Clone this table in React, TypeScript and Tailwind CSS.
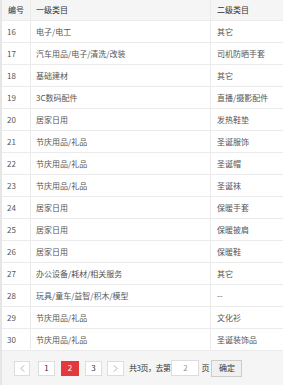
import React from "react";

// 表格数据：编号 / 一级类目 / 二级类目
const rows: [number, string, string][] = [
  [16, "电子/电工", "其它"],
  [17, "汽车用品/电子/清洗/改装", "司机防晒手套"],
  [18, "基础建材", "其它"],
  [19, "3C数码配件", "直播/摄影配件"],
  [20, "居家日用", "发热鞋垫"],
  [21, "节庆用品/礼品", "圣诞服饰"],
  [22, "节庆用品/礼品", "圣诞帽"],
  [23, "节庆用品/礼品", "圣诞袜"],
  [24, "居家日用", "保暖手套"],
  [25, "居家日用", "保暖披肩"],
  [26, "居家日用", "保暖鞋"],
  [27, "办公设备/耗材/相关服务", "其它"],
  [28, "玩具/童车/益智/积木/模型", "--"],
  [29, "节庆用品/礼品", "文化衫"],
  [30, "节庆用品/礼品", "圣诞装饰品"],
];

export default function App() {
  return (
    <div
      className="w-[283px] h-[385px] bg-white text-[8px] text-[#555] border-l-2 border-[#e6e6e6] overflow-hidden"
      style={{ fontFamily: '"Microsoft YaHei", "Noto Sans CJK SC", sans-serif' }}
    >
      {/* 表头 */}
      <div className="grid grid-cols-[29px_180px_1fr] h-[21px] bg-[#f5f5f5] text-[#333] border-b border-[#ebebeb]">
        <div className="flex items-center pl-[6px] border-r border-[#ebebeb]">编号</div>
        <div className="flex items-center pl-[5px] border-r border-[#ebebeb]">一级类目</div>
        <div className="flex items-center pl-[6px]">二级类目</div>
      </div>

      {rows.map(([id, first, second]) => (
        <div
          key={id}
          className="grid grid-cols-[29px_180px_1fr] h-[22px] border-b border-[#ebebeb]"
        >
          <div className="flex items-center pl-[5px] border-r border-[#ebebeb]">{id}</div>
          <div className="flex items-center pl-[5px] border-r border-[#ebebeb]">{first}</div>
          <div className="flex items-center pl-[6px]">{second}</div>
        </div>
      ))}

      {/* 分页 */}
      <div className="flex items-center h-[34px] bg-[#f5f5f5] pl-[12px]">
        <button className="w-[16px] h-[15px] flex items-center justify-center border border-[#ddd] bg-white text-[#aaa]">
          <svg width="5" height="7" viewBox="0 0 5 7" fill="none">
            <path d="M4 0.5L1 3.5L4 6.5" stroke="#999" strokeWidth="0.8" />
          </svg>
        </button>
        <button className="ml-[8px] w-[17px] h-[15px] flex items-center justify-center border border-[#ddd] bg-white text-[#333]">
          1
        </button>
        <button className="ml-[6px] w-[18px] h-[15px] flex items-center justify-center bg-[#e4393c] text-white">
          2
        </button>
        <button className="ml-[6px] w-[17px] h-[15px] flex items-center justify-center border border-[#ddd] bg-white text-[#333]">
          3
        </button>
        <button className="ml-[5px] w-[17px] h-[15px] flex items-center justify-center border border-[#ddd] bg-white">
          <svg width="5" height="7" viewBox="0 0 5 7" fill="none">
            <path d="M1 0.5L4 3.5L1 6.5" stroke="#999" strokeWidth="0.8" />
          </svg>
        </button>
        <span className="ml-[5px] text-[#333] tracking-[-0.5px] whitespace-nowrap">共3页，去第</span>
        <div className="ml-[1px] w-[28px] h-[16px] flex items-center justify-center border border-[#ddd] bg-white text-[#999]">
          2
        </div>
        <span className="ml-[2px] text-[#333]">页</span>
        <button className="ml-[2px] w-[31px] h-[17px] flex items-center justify-center border border-[#ccc] bg-[#f0f0f0] text-[#333]">
          确定
        </button>
      </div>
    </div>
  );
}
